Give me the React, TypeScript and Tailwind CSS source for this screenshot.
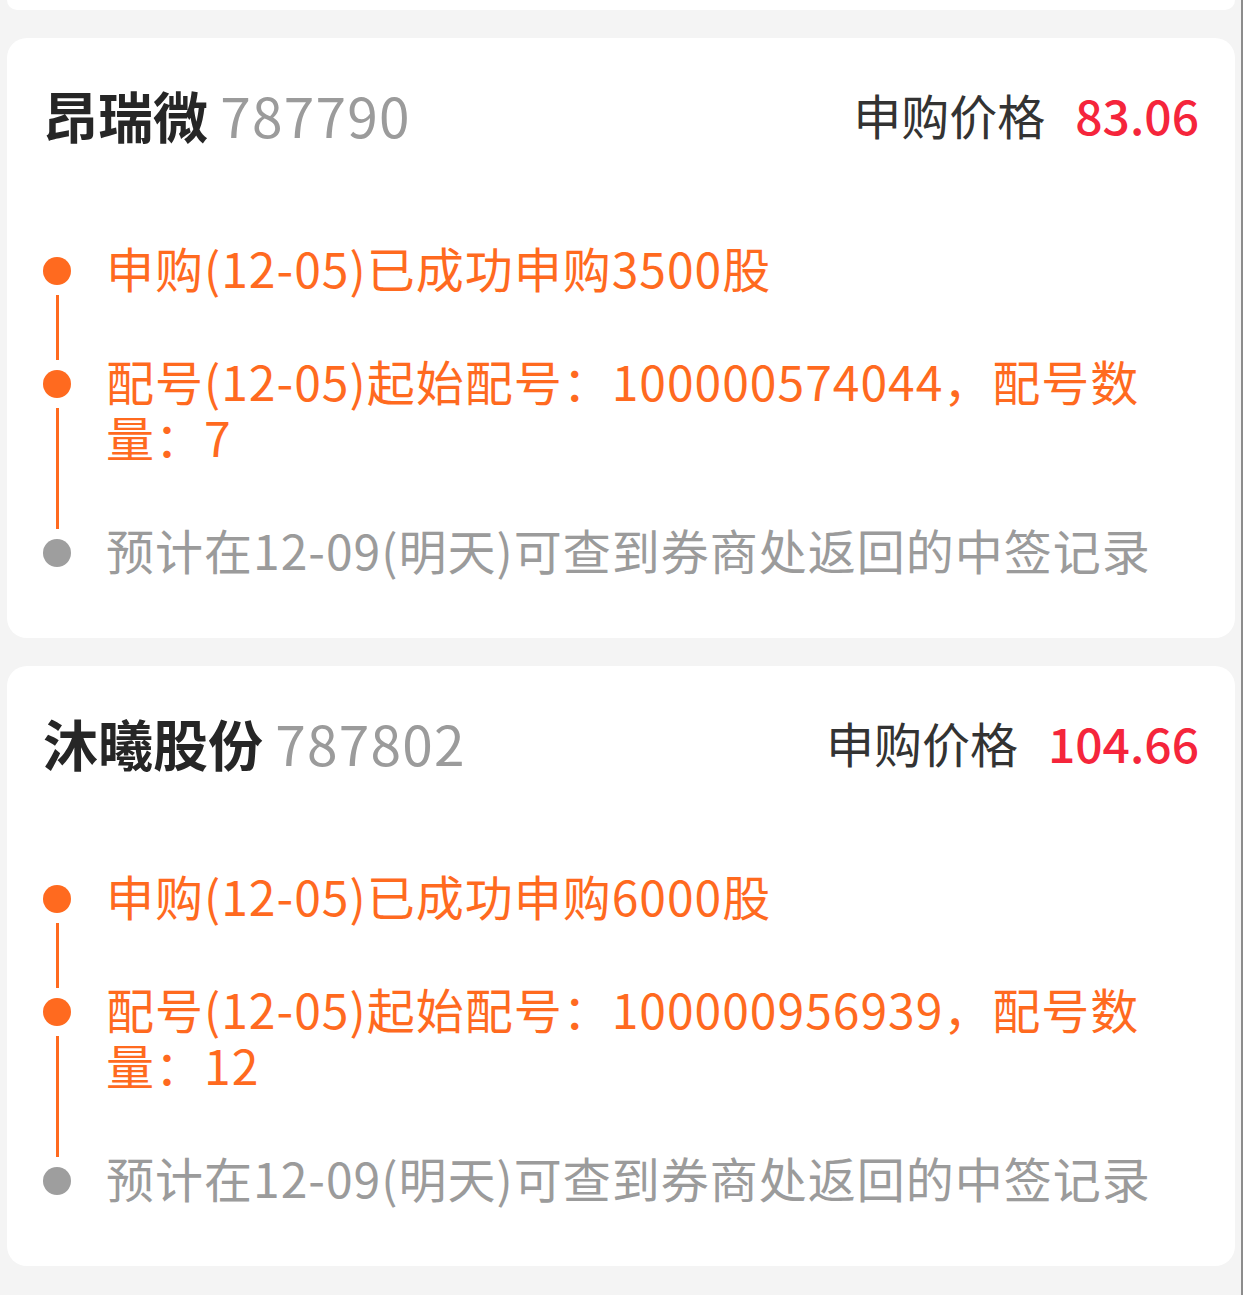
const FONT = { fontFamily: '"Noto Sans CJK SC", "Noto Sans", sans-serif' };

type Step = { lines: string; done: boolean };

type Stock = {
  name: string;
  code: string;
  price: string;
  steps: Step[];
};

const stocks: Stock[] = [
  {
    name: "昂瑞微",
    code: "787790",
    price: "83.06",
    steps: [
      { lines: "申购(12-05)已成功申购3500股", done: true },
      { lines: "配号(12-05)起始配号：100000574044，配号数量：7", done: true },
      { lines: "预计在12-09(明天)可查到券商处返回的中签记录", done: false },
    ],
  },
  {
    name: "沐曦股份",
    code: "787802",
    price: "104.66",
    steps: [
      { lines: "申购(12-05)已成功申购6000股", done: true },
      { lines: "配号(12-05)起始配号：100000956939，配号数量：12", done: true },
      { lines: "预计在12-09(明天)可查到券商处返回的中签记录", done: false },
    ],
  },
];

const StockCard = ({ stock }: { stock: Stock }) => {
  return (
    <div className="ml-[7px] mr-[6px] rounded-[20px] bg-white px-[36px]">
      <div className="flex h-[152px] items-center justify-between">
        <div className="text-[55px] leading-[64px]">
          <span className="font-semibold text-[#262626]">{stock.name}</span>{" "}
          <span className="tracking-[1.2px] text-[#9b9b9b]">{stock.code}</span>
        </div>
        <div className="flex items-center text-[48px] leading-[64px]">
          <span className="text-[#333333]">申购价格</span>
          <span className="ml-[30px] font-medium text-[#f5253b]">{stock.price}</span>
        </div>
      </div>
      <div className="mt-[53px]">
        {stock.steps.map((step, i) => (
          <div key={i} className="flex">
            <div className="flex w-[28px] flex-col items-center">
              <div
                className={
                  step.done
                    ? "mt-[14px] h-[28px] w-[28px] shrink-0 rounded-full bg-[#ff6a1f]"
                    : "mt-[14px] h-[28px] w-[28px] shrink-0 rounded-full bg-[#9e9e9e]"
                }
              ></div>
              {i < stock.steps.length - 1 && (
                <div className="-mb-[4px] mt-[10px] w-[3px] flex-1 bg-[#ff6a1f]"></div>
              )}
            </div>
            <div
              className={
                step.done
                  ? "-mt-[4px] ml-[35px] flex-1 pb-[61px] pr-[30px] text-[48px] leading-[56px] tracking-[1px] text-[#ff6a1f]"
                  : "-mt-[4px] ml-[35px] flex-1 pb-[61px] pr-[30px] text-[48px] leading-[56px] tracking-[1px] text-[#9b9b9b]"
              }
            >
              {step.lines}
            </div>
          </div>
        ))}
      </div>
    </div>
  );
};

export default function App() {
  return (
    <div
      className="min-h-[1295px] border-r-2 border-[#8c8c8c] bg-[#f4f4f4]"
      style={FONT}
    >
      <div className="ml-[7px] mr-[6px] h-[10px] rounded-b-[20px] bg-white"></div>
      <div className="mt-[28px] flex flex-col gap-[28px]">
        {stocks.map((s) => (
          <StockCard key={s.code} stock={s} />
        ))}
      </div>
    </div>
  );
}
